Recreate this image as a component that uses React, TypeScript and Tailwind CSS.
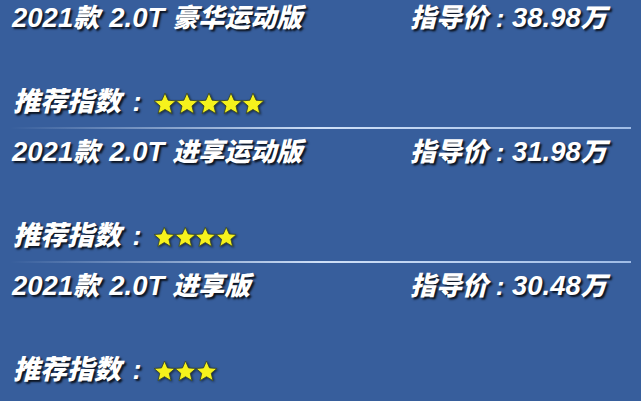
import React from "react";

const Star = ({ s }: { s: string }) => (
  <svg viewBox="1.2 1.6 21.6 20.4" className={`${s} [filter:drop-shadow(1px_1px_1px_rgba(0,0,0,0.55))]`}>
    <path
      d="M12 1.5l3.1 7.1 7.6.6-5.8 5 1.8 7.5L12 17.7l-6.7 4 1.8-7.5-5.8-5 7.6-.6z"
      fill="#f6f21c"
      stroke="#3a4a2a"
      strokeWidth="0.9"
      strokeLinejoin="round"
    />
  </svg>
);

const rows = [
  { model: "豪华运动版", price: "38.98", stars: 5, ss: "w-[22px] h-[21px]" },
  { model: "进享运动版", price: "31.98", stars: 4, ss: "w-[20.5px] h-[20px]" },
  { model: "进享版", price: "30.48", stars: 3, ss: "w-[21px] h-[20px]" },
];

const txt =
  "text-white font-black italic [font-family:'Liberation_Sans','Noto_Sans_CJK_SC',sans-serif] [text-shadow:2px_2px_2px_rgba(0,0,0,0.8)]";

export default function App() {
  return (
    <div className="w-[641px] h-[401px] bg-[#375e9c] overflow-hidden flex flex-col pt-[3px]">
      {rows.map((r, i) => (
        <div key={i} className="flex flex-col">
          <div className="grid grid-cols-[410px_1fr] h-[30px] items-center">
            <div className={`${txt} pl-[12px] text-[26px] leading-[30px] whitespace-pre flex items-baseline`}>
              <span className="text-[27.5px]">2021</span>
              <span>款</span>
              <span className="text-[27.5px] ml-[10px]">2.0T</span>
              <span className="ml-[8px]">{r.model}</span>
            </div>
            <div className={`${txt} text-[26px] leading-[30px] whitespace-pre flex items-baseline`}>
              <span>指导价</span>
              <span className="w-[24px] text-center">:</span>
              <span className="text-[27.5px]">{r.price}</span>
              <span>万</span>
            </div>
          </div>
          <div className="mt-[54px] h-[30px] flex items-center pl-[13px]">
            <span className={`${txt} text-[27px] leading-[30px]`}>推荐指数</span>
            <span className={`${txt} text-[27px] leading-[30px] w-[32px] text-center`}>:</span>
            <span className="flex ml-[1px] mt-[2px]">
              {Array.from({ length: r.stars }).map((_, k) => (
                <Star key={k} s={r.ss} />
              ))}
            </span>
          </div>
          {i < 2 && (
            <div className="mt-[10px] mb-[8px] mx-[10px] h-[2px] bg-gradient-to-r from-transparent via-[#cfe0f7] to-[#9fbce6]" />
          )}
        </div>
      ))}
    </div>
  );
}
